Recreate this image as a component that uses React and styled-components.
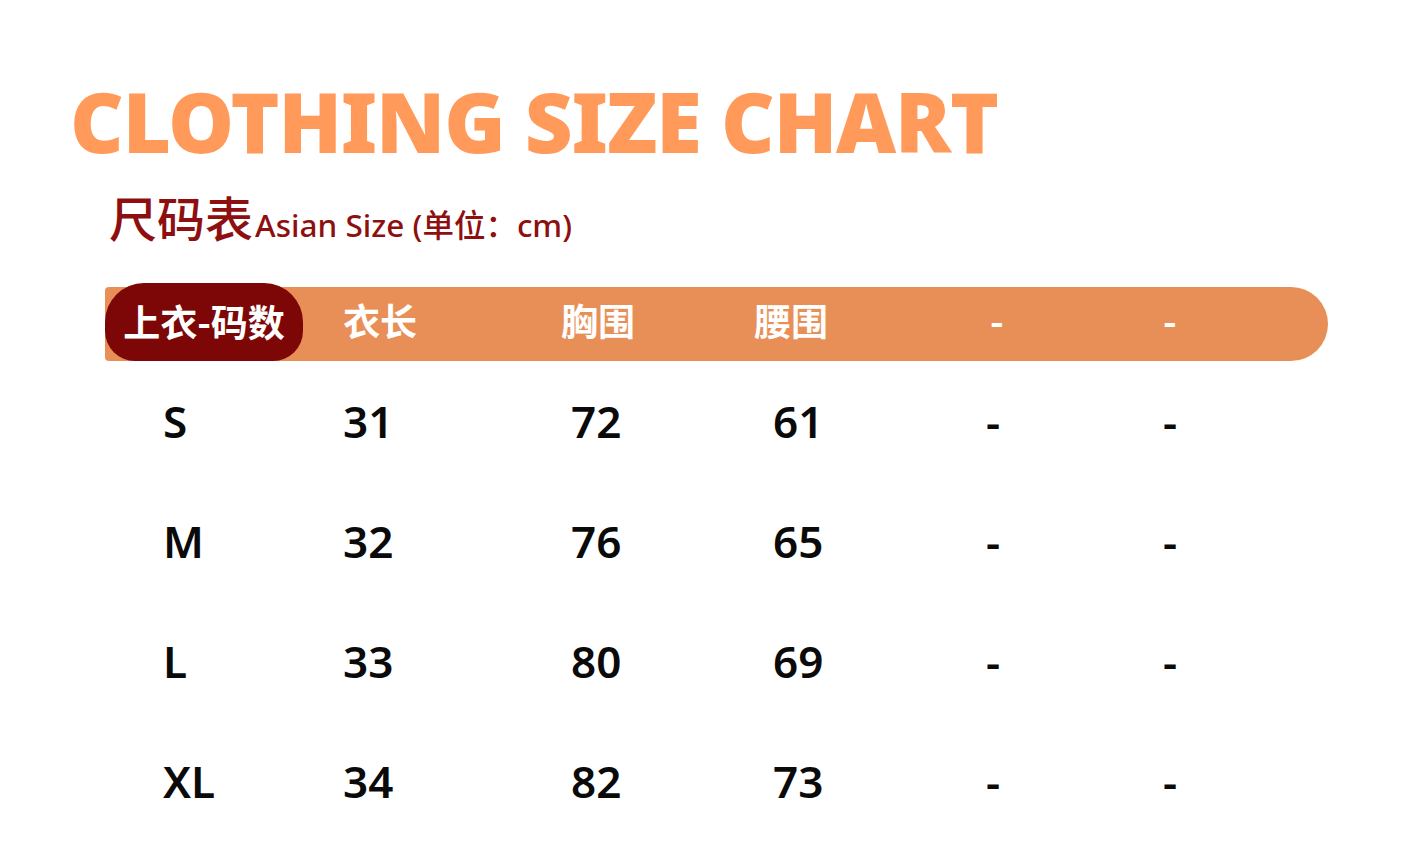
import React from 'react'
import styled, { createGlobalStyle } from 'styled-components'

const GlobalStyle = createGlobalStyle`
  body {
    margin: 0;
    background: #ffffff;
    font-family: "Noto Sans", "Noto Sans CJK SC", sans-serif;
  }
`

const colors = {
  orange: '#ff9a5a',
  bar: '#e88f58',
  darkRed: '#7d0606',
  subtitle: '#8e0f0f',
  text: '#0a0a0a',
}

const COLUMNS = '238px 222px 200px 225px 175px 1fr'

const Page = styled.div`
  width: 1413px;
  height: 856px;
  padding: 76px 0 0 70px;
  box-sizing: border-box;
  overflow: hidden;
`

const Title = styled.h1`
  margin: 0;
  color: ${colors.orange};
  font-family: "Noto Sans", sans-serif;
  font-weight: 900;
  font-size: 83px;
  line-height: 90px;
  letter-spacing: -1.2px;
  white-space: nowrap;
`

const Subtitle = styled.div`
  display: flex;
  align-items: baseline;
  margin: 22px 0 0 39px;
  color: ${colors.subtitle};
  font-family: "Noto Sans", "Noto Sans CJK SC", sans-serif;
`

const SubtitleCn = styled.span`
  font-family: "Noto Sans CJK SC", sans-serif;
  font-weight: 500;
  font-size: 48px;
  line-height: 56px;
`

const SubtitleEn = styled.span`
  font-weight: 500;
  font-size: 31.5px;
  margin-left: 2px;
`

const Table = styled.div`
  margin: 41px 0 0 35px;
  width: 1223px;
`

const HeaderBar = styled.div`
  display: grid;
  grid-template-columns: ${COLUMNS};
  align-items: center;
  height: 74px;
  background: ${colors.bar};
  border-radius: 4px 37px 37px 4px;
`

const HeaderCell = styled.div`
  color: #ffffff;
  font-family: "Noto Sans CJK SC", sans-serif;
  font-weight: 700;
  font-size: 37px;
  line-height: 40px;
  padding-bottom: 8px;
  margin-left: ${p => p.$shift || 0}px;
`

const SizePill = styled.div`
  width: 198px;
  height: 78px;
  margin-top: -4px;
  box-sizing: border-box;
  display: flex;
  align-items: center;
  justify-content: center;
  background: ${colors.darkRed};
  border-radius: 39px 39px 30px 30px;
  color: #ffffff;
  font-family: "Noto Sans CJK SC", sans-serif;
  font-weight: 700;
  font-size: 37px;
  padding-bottom: 2px;
`

const Row = styled.div`
  display: grid;
  grid-template-columns: ${COLUMNS};
  align-items: center;
  height: 120px;
`

const Cell = styled.div`
  color: ${colors.text};
  font-family: "Noto Sans", sans-serif;
  font-weight: 600;
  font-size: 44px;
  line-height: 50px;
  margin-left: ${p => p.$shift || 0}px;
`

const headers = ['衣长', '胸围', '腰围', '-', '-']

const rows = [
  ['S', '31', '72', '61', '-', '-'],
  ['M', '32', '76', '65', '-', '-'],
  ['L', '33', '80', '69', '-', '-'],
  ['XL', '34', '82', '73', '-', '-'],
]

const shifts = [58, 0, 6, 8, -4, -2]
const headerShifts = [0, -4, -11, 0, -2]

export default function App() {
  return (
    <Page>
      <GlobalStyle />
      <Title>CLOTHING SIZE CHART</Title>
      <Subtitle>
        <SubtitleCn>尺码表</SubtitleCn>
        <SubtitleEn>Asian Size (单位：cm)</SubtitleEn>
      </Subtitle>
      <Table>
        <HeaderBar>
          <SizePill>上衣-码数</SizePill>
          {headers.map((h, i) => (
            <HeaderCell key={i} $shift={headerShifts[i]}>{h}</HeaderCell>
          ))}
        </HeaderBar>
        {rows.map((r, ri) => (
          <Row key={ri}>
            {r.map((c, ci) => (
              <Cell key={ci} $shift={shifts[ci]}>{c}</Cell>
            ))}
          </Row>
        ))}
      </Table>
    </Page>
  )
}
